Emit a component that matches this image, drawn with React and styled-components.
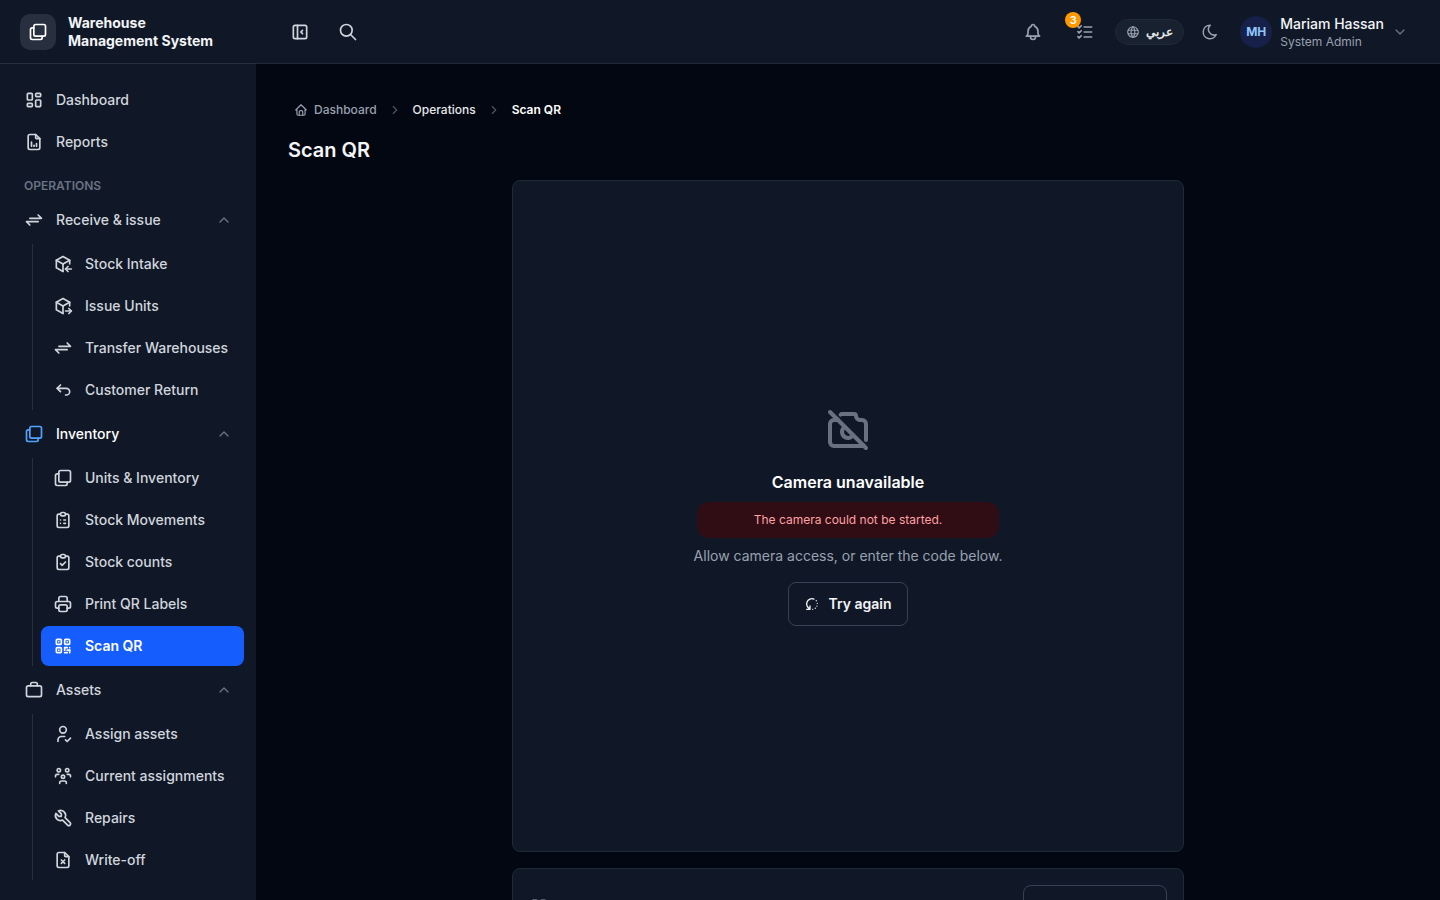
import React from 'react';
import styled, { createGlobalStyle, css } from 'styled-components';
import {
  TbArrowBackUp, TbArrowsExchange, TbBell, TbBoxMultiple, TbBriefcase2, TbCameraOff,
  TbChevronDown, TbChevronRight, TbChevronUp, TbClipboardCheck, TbClipboardList,
  TbFileAnalytics, TbFileX, TbHome, TbLayoutDashboard, TbLayoutSidebarLeftCollapse,
  TbListCheck, TbMoon, TbPackageExport, TbPackageImport, TbPrinter, TbQrcode,
  TbRotate2, TbSearch, TbTool, TbUserCheck, TbUsersGroup, TbWorld,
} from 'react-icons/tb';

const GlobalStyle = createGlobalStyle`
  *, *::before, *::after { box-sizing: border-box; }
  body {
    margin: 0;
    background: #030712;
    color: #f3f4f6;
    font-family: Inter, "Noto Sans", sans-serif;
    font-size: 14px;
    line-height: 20px;
  }
  button { font: inherit; color: inherit; border: 0; background: none; padding: 0; cursor: pointer; }
  a { color: inherit; text-decoration: none; }
  h1, h2, p, ul, ol { margin: 0; padding: 0; }
  ul, ol { list-style: none; }
  svg { display: block; flex: none; }
`;

const Shell = styled.div`
  height: 100vh;
  display: grid;
  grid-template: 64px minmax(0, 1fr) / 256px minmax(0, 1fr);
  overflow: hidden;
`;

const Brand = styled.div`
  display: flex;
  align-items: center;
  gap: 12px;
  padding: 0 20px;
  background: #101828;
  border-bottom: 1px solid #272e3d;
  font-weight: 700;
  line-height: 18px;
`;

const BrandMark = styled.span`
  display: grid;
  place-items: center;
  width: 36px;
  height: 36px;
  border-radius: 10px;
  background: #282f3e;
  color: #fff;
`;

const TopBar = styled.header`
  display: flex;
  align-items: center;
  gap: 8px;
  padding: 0 32px 0 24px;
  background: #101828;
  border-bottom: 1px solid #1e2939;
`;

const IconButton = styled.button`
  position: relative;
  display: grid;
  place-items: center;
  width: ${(p) => p.$size || 44}px;
  height: ${(p) => p.$size || 44}px;
  color: ${(p) => (p.$bright ? '#d1d5dc' : '#99a1af')};
`;

const TopActions = styled.div`
  display: flex;
  align-items: center;
  gap: 8px;
  margin-left: auto;
`;

const Badge = styled.span`
  position: absolute;
  top: 2px;
  left: 2px;
  width: 16px;
  height: 16px;
  border-radius: 8px;
  background: #fe9a00;
  color: #fff;
  font-size: 11px;
  font-weight: 600;
  line-height: 16px;
  text-align: center;
`;

const LanguageButton = styled.button`
  display: flex;
  align-items: center;
  gap: 6px;
  height: 26px;
  padding: 0 10px;
  border: 1px solid #1e2939;
  border-radius: 13px;
  background: #18212f;
  color: #99a1af;
  font-size: 12px;
  font-weight: 600;
  span { color: #e5e7eb; }
`;

const Account = styled.button`
  display: flex;
  align-items: center;
  gap: 8px;
  padding-left: 4px;
  text-align: left;
  color: #6a7282;
`;

const Avatar = styled.span`
  display: grid;
  place-items: center;
  width: 32px;
  height: 32px;
  border-radius: 50%;
  background: #162048;
  color: #8ec5ff;
  font-size: 12px;
  font-weight: 700;
`;

const AccountText = styled.span`
  display: grid;
  color: #f3f4f6;
  font-weight: 500;
  line-height: 20px;
  small { color: #99a1af; font-size: 12px; font-weight: 400; line-height: 16px; }
`;

const Sidebar = styled.nav`
  padding: 16px 12px;
  background: #101828;
  overflow: hidden;
`;

const NavList = styled.ul`
  display: grid;
  gap: 2px;
`;

const GroupList = styled.ul`
  display: grid;
  gap: 4px;
`;

const SubList = styled(NavList)`
  margin: 4px 0 0 20px;
  padding-left: 8px;
  border-left: 1px solid #272e3d;
`;

const SectionLabel = styled.h2`
  margin: 16px 12px 6px;
  color: #6a7282;
  font-size: 12px;
  font-weight: 600;
  line-height: 16px;
`;

const itemStyles = css`
  display: flex;
  align-items: center;
  gap: 12px;
  width: 100%;
  height: 40px;
  padding: 0 12px;
  border-radius: 8px;
  font-weight: ${(p) => (p.$active ? 600 : 500)};
  color: ${(p) => (p.$active || p.$current ? '#fff' : '#d1d5dc')};
  background: ${(p) => (p.$active ? '#155dfc' : 'transparent')};
  white-space: nowrap;
`;

const NavLink = styled.a`${itemStyles}`;

const GroupButton = styled.button`
  ${itemStyles}
  svg:first-child { color: ${(p) => (p.$current ? '#51a2ff' : 'inherit')}; }
  svg:last-child { margin-left: auto; color: #6a7282; }
`;

const Main = styled.main`
  padding: 32px;
  overflow: hidden;
`;

const Breadcrumb = styled.ol`
  display: flex;
  align-items: center;
  gap: 11px;
  height: 28px;
  padding-left: 6px;
  font-size: 12px;
  font-weight: 500;
  line-height: 16px;
  color: #4a5565;
`;

const Crumb = styled.li`
  color: ${(p) => p.$color};
  font-weight: ${(p) => p.$weight || 500};
  a { display: flex; align-items: center; gap: 6px; }
`;

const PageTitle = styled.h1`
  margin-top: 12px;
  font-size: 20px;
  font-weight: 600;
  line-height: 28px;
`;

const Content = styled.div`
  display: grid;
  gap: 16px;
  max-width: 672px;
  margin: 16px auto 0;
`;

const Card = styled.section`
  border: 1px solid #1e2939;
  border-radius: 8px;
  background: #101828;
`;

const CameraCard = styled(Card)`
  display: grid;
  place-content: center;
  justify-items: center;
  aspect-ratio: 1;
  text-align: center;
  color: #99a1af;
`;

const CameraIcon = styled.span`
  color: #6a7282;
`;

const CameraTitle = styled.h2`
  margin: 16px 0 8px;
  color: #fff;
  font-size: 16px;
  font-weight: 600;
  line-height: 24px;
`;

const ErrorNote = styled.p`
  width: 302px;
  margin-bottom: 8px;
  padding: 10px 12px;
  border-radius: 12px;
  background: #300d15;
  color: #ffa2a2;
  font-size: 12px;
  line-height: 16px;
`;

const OutlineButton = styled.button`
  display: flex;
  align-items: center;
  justify-content: center;
  gap: 8px;
  height: 44px;
  padding: 0 15px;
  border: 1px solid #364153;
  border-radius: 8px;
  color: #f3f4f6;
  font-weight: 600;
`;

const RetryButton = styled(OutlineButton)`
  margin-top: 16px;
`;

const CodeCard = styled(Card)`
  display: flex;
  align-items: center;
  justify-content: space-between;
  padding: 16px;
  color: #99a1af;
`;

const WideButton = styled(OutlineButton)`
  min-width: 144px;
`;

const groups = [
  {
    label: 'Receive & issue', Icon: TbArrowsExchange,
    items: [
      ['Stock Intake', TbPackageImport],
      ['Issue Units', TbPackageExport],
      ['Transfer Warehouses', TbArrowsExchange],
      ['Customer Return', TbArrowBackUp],
    ],
  },
  {
    label: 'Inventory', Icon: TbBoxMultiple, current: true,
    items: [
      ['Units & Inventory', TbBoxMultiple],
      ['Stock Movements', TbClipboardList],
      ['Stock counts', TbClipboardCheck],
      ['Print QR Labels', TbPrinter],
      ['Scan QR', TbQrcode, true],
    ],
  },
  {
    label: 'Assets', Icon: TbBriefcase2,
    items: [
      ['Assign assets', TbUserCheck],
      ['Current assignments', TbUsersGroup],
      ['Repairs', TbTool],
      ['Write-off', TbFileX],
    ],
  },
];

function NavItem({ label, Icon, active }) {
  return (
    <li>
      <NavLink href="#" $active={active} aria-current={active ? 'page' : undefined}>
        <Icon size={20} />
        {label}
      </NavLink>
    </li>
  );
}

export default function App() {
  return (
    <>
      <GlobalStyle />
      <Shell>
        <Brand>
          <BrandMark><TbBoxMultiple size={20} /></BrandMark>
          <span>Warehouse<br />Management System</span>
        </Brand>
        <TopBar>
          <IconButton $size={40} $bright aria-label="Collapse sidebar"><TbLayoutSidebarLeftCollapse size={20} /></IconButton>
          <IconButton $size={40} $bright aria-label="Search"><TbSearch size={20} /></IconButton>
          <TopActions>
            <IconButton aria-label="Notifications"><TbBell size={20} /></IconButton>
            <IconButton aria-label="Tasks"><TbListCheck size={20} /><Badge>3</Badge></IconButton>
            <LanguageButton lang="ar"><TbWorld size={14} /><span>عربي</span></LanguageButton>
            <IconButton $size={36} aria-label="Dark mode"><TbMoon size={18} /></IconButton>
            <Account>
              <Avatar>MH</Avatar>
              <AccountText>Mariam Hassan<small>System Admin</small></AccountText>
              <TbChevronDown size={16} />
            </Account>
          </TopActions>
        </TopBar>
        <Sidebar aria-label="Main">
          <NavList>
            <NavItem label="Dashboard" Icon={TbLayoutDashboard} />
            <NavItem label="Reports" Icon={TbFileAnalytics} />
          </NavList>
          <SectionLabel>OPERATIONS</SectionLabel>
          <GroupList>
            {groups.map(({ label, Icon, items, current }) => (
              <li key={label}>
                <GroupButton $current={current} aria-expanded="true">
                  <Icon size={20} />
                  {label}
                  <TbChevronUp size={16} />
                </GroupButton>
                <SubList>
                  {items.map(([name, ItemIcon, active]) => (
                    <NavItem key={name} label={name} Icon={ItemIcon} active={active} />
                  ))}
                </SubList>
              </li>
            ))}
          </GroupList>
        </Sidebar>
        <Main>
          <Breadcrumb>
            <Crumb $color="#99a1af"><a href="#"><TbHome size={14} />Dashboard</a></Crumb>
            <li><TbChevronRight size={14} /></li>
            <Crumb $color="#e5e7eb">Operations</Crumb>
            <li><TbChevronRight size={14} /></li>
            <Crumb $color="#fff" $weight={600} aria-current="page">Scan QR</Crumb>
          </Breadcrumb>
          <PageTitle>Scan QR</PageTitle>
          <Content>
            <CameraCard>
              <CameraIcon><TbCameraOff size={48} /></CameraIcon>
              <CameraTitle>Camera unavailable</CameraTitle>
              <ErrorNote role="alert">The camera could not be started.</ErrorNote>
              <p>Allow camera access, or enter the code below.</p>
              <RetryButton><TbRotate2 size={16} />Try again</RetryButton>
            </CameraCard>
            <CodeCard>
              <TbQrcode size={20} />
              <WideButton aria-label="Enter code" />
            </CodeCard>
          </Content>
        </Main>
      </Shell>
    </>
  );
}
